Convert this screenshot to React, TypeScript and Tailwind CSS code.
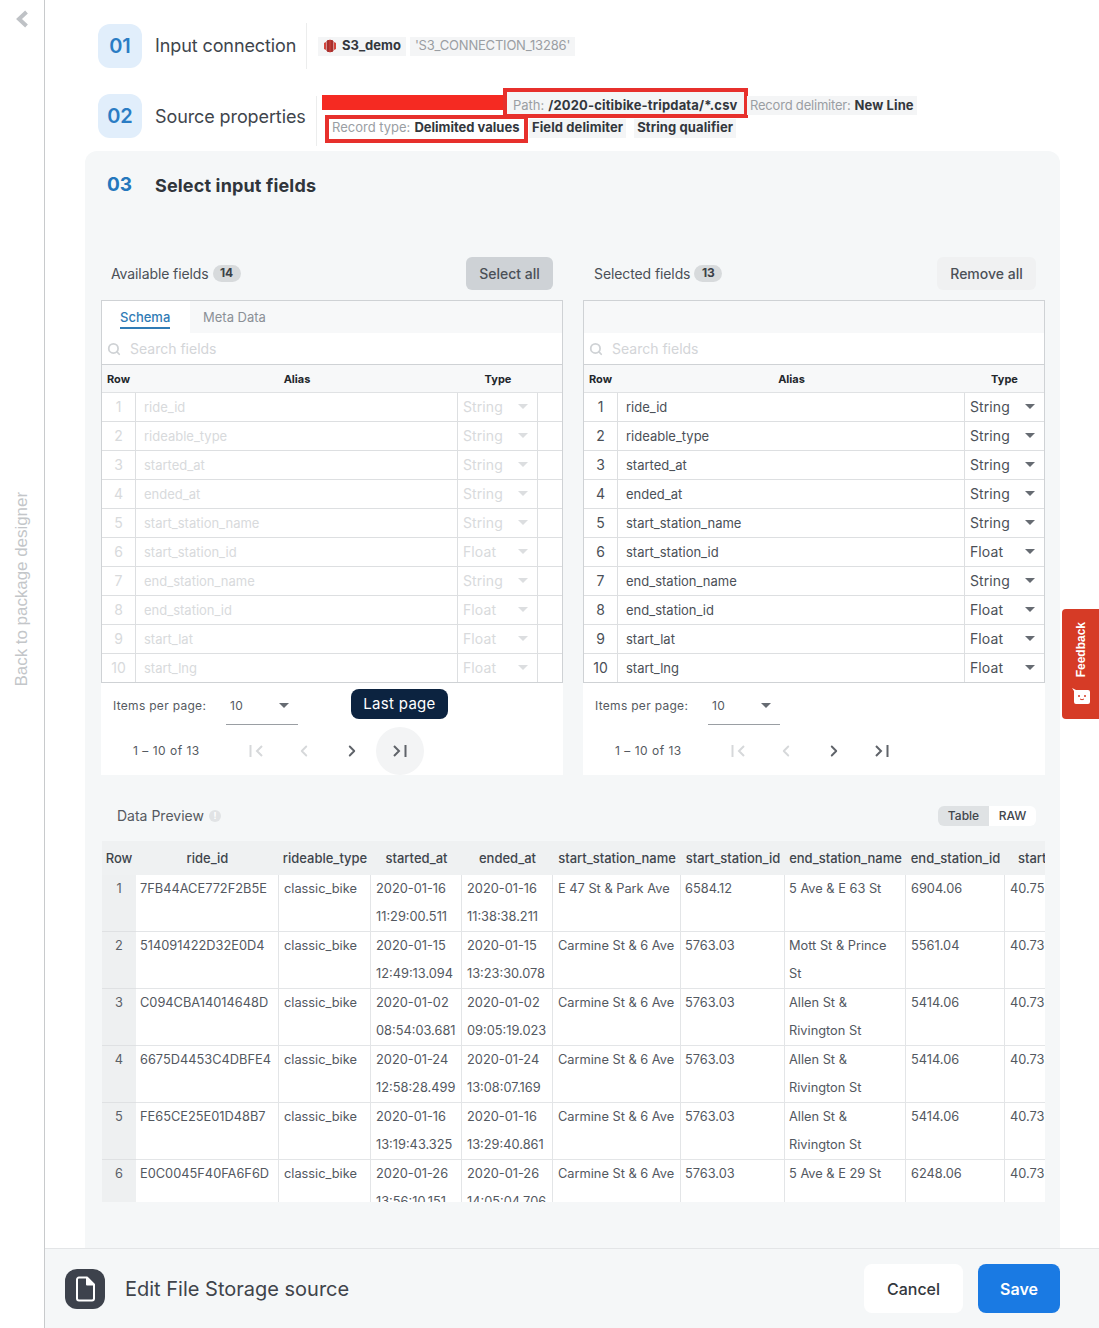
import { ChevronLeft, ChevronRight, Search } from 'lucide-react'

const fields = [
  ['ride_id', 'String'],
  ['rideable_type', 'String'],
  ['started_at', 'String'],
  ['ended_at', 'String'],
  ['start_station_name', 'String'],
  ['start_station_id', 'Float'],
  ['end_station_name', 'String'],
  ['end_station_id', 'Float'],
  ['start_lat', 'Float'],
  ['start_lng', 'Float'],
]

const columns = [
  ['Row', 'w-[34px]'],
  ['ride_id', 'w-[143px]'],
  ['rideable_type', 'w-[92px]'],
  ['started_at', 'w-[91px]'],
  ['ended_at', 'w-[91px]'],
  ['start_station_name', 'w-[128px]'],
  ['start_station_id', 'w-[104px]'],
  ['end_station_name', 'w-[121px]'],
  ['end_station_id', 'w-[99px]'],
  ['start_lat', 'w-[76px]'],
]

const preview = [
  ['7FB44ACE772F2B5E', '2020-01-16 11:29:00.511', '2020-01-16 11:38:38.211', 'E 47 St & Park Ave', '6584.12', '5 Ave & E 63 St', '6904.06', '40.75'],
  ['514091422D32E0D4', '2020-01-15 12:49:13.094', '2020-01-15 13:23:30.078', 'Carmine St & 6 Ave', '5763.03', 'Mott St & Prince St', '5561.04', '40.73'],
  ['C094CBA14014648D', '2020-01-02 08:54:03.681', '2020-01-02 09:05:19.023', 'Carmine St & 6 Ave', '5763.03', 'Allen St & Rivington St', '5414.06', '40.73'],
  ['6675D4453C4DBFE4', '2020-01-24 12:58:28.499', '2020-01-24 13:08:07.169', 'Carmine St & 6 Ave', '5763.03', 'Allen St & Rivington St', '5414.06', '40.73'],
  ['FE65CE25E01D48B7', '2020-01-16 13:19:43.325', '2020-01-16 13:29:40.861', 'Carmine St & 6 Ave', '5763.03', 'Allen St & Rivington St', '5414.06', '40.73'],
  ['E0C0045F40FA6F6D', '2020-01-26 13:56:10.151', '2020-01-26 14:05:04.706', 'Carmine St & 6 Ave', '5763.03', '5 Ave & E 29 St', '6248.06', '40.73'],
]

function Caret({ light }: { light?: boolean }) {
  return (
    <span className={`block w-0 h-0 border-x-[5px] border-x-transparent border-t-[5px] ${light ? 'border-t-[#dcdee0]' : 'border-t-[#666b72]'}`} />
  )
}

function LastIcon({ className }: { className?: string }) {
  return (
    <svg width="16" height="14" viewBox="0 0 16 14" fill="none" stroke="currentColor" strokeWidth="2" className={className}>
      <path d="M2 2l5 5-5 5" />
      <path d="M13.5 1v12" />
    </svg>
  )
}

function FieldPanel({ faded, tabs, tooltip }: { faded?: boolean; tabs?: boolean; tooltip?: boolean }) {
  const text = faded ? 'text-[#d8dadc]' : 'text-[#4b5057]'
  const cols = tabs ? 'grid-cols-[34px_322px_80px_1fr]' : 'grid-cols-[34px_347px_1fr]'
  return (
    <div className="w-[462px] relative">
      <div className="bg-white border border-[#cfd2d5] h-[383px] overflow-hidden">
        <div className="h-[32px] flex bg-[#f7f8f9]">
          {tabs && (
            <>
              <div className="w-[88px] bg-white pl-[18px] pt-[8px] flex items-start">
                <span className="block text-[13px] leading-[17px] font-medium text-[#2f7bb5] border-b-2 border-[#2f7bb5] pb-[1px]">Schema</span>
              </div>
              <div className="pl-[13px] pt-[8px] text-[13px] leading-[17px] text-[#8b9097]">Meta Data</div>
            </>
          )}
        </div>
        <div className="h-[32px] flex items-center gap-[9px] pl-[5px] border-b border-[#cfd2d5]">
          <Search size={14} strokeWidth={3} className="text-[#cfd2d5]" />
          <span className="text-[14px] text-[#d3d5d8]">Search fields</span>
        </div>
        <div className={`grid ${cols} h-[28px] pt-[1px] bg-[#f7f8f9] items-center border-b border-[#e0e2e4] text-[11px] font-bold text-[#23272c]`}>
          <span className="pl-[5px]">Row</span>
          <span className="text-center">Alias</span>
          <span className="text-center">Type</span>
        </div>
        {fields.map(([name, type], i) => (
          <div key={name} className={`grid ${cols} h-[29px] border-b border-[#dddfe1] text-[13px] ${text}`}>
            <span className="text-center text-[14px] leading-[28px] border-r border-[#dddfe1]">{i + 1}</span>
            <span className="pl-[8px] leading-[28px] border-r border-[#dddfe1]">{name}</span>
            <span className={`flex items-center justify-between pl-[5px] pr-[9px] pb-[1px] text-[14px] tracking-[0.1px] ${tabs ? 'border-r border-[#dddfe1]' : ''}`}>
              {type}
              <Caret light={faded} />
            </span>
            {tabs && <span />}
          </div>
        ))}
      </div>
      <div className="bg-white h-[92px] text-[12px] text-[#555a61] tracking-[0.3px]">
        <div className="flex items-center h-[39px] pt-[6px] pl-[12px]">
          <span className="w-[113px]">Items per page:</span>
          <div className="w-[72px] h-[33px] flex items-center justify-between pl-[4px] pr-[9px] pb-[5px] border-b border-[#9a9ea3] mt-[6px]">
            10
            <Caret />
          </div>
        </div>
        <div className="flex items-center h-[48px] mt-[5px] pl-[32px]">
          <span className="w-[99px] tracking-[0.5px]">1 – 10 of 13</span>
          <div className="w-[48px] flex justify-center text-[#d6d8da]">
            <LastIcon className="rotate-180" />
          </div>
          <div className="w-[48px] flex justify-center text-[#d6d8da]">
            <ChevronLeft size={18} strokeWidth={2.5} />
          </div>
          <div className="w-[48px] flex justify-center text-[#5f6369]">
            <ChevronRight size={18} strokeWidth={2.5} />
          </div>
          <div className={`w-[48px] h-[48px] rounded-full flex items-center justify-center text-[#5f6369] ${tooltip ? 'bg-[#f3f4f5]' : ''}`}>
            <LastIcon />
          </div>
        </div>
      </div>
      {tooltip && (
        <div className="absolute left-[250px] top-[389px] w-[97px] h-[30px] rounded-lg bg-[#0c2340] text-white text-[15px] flex items-center justify-center tracking-[0.3px]">
          Last page
        </div>
      )}
    </div>
  )
}

function Chip({ label, value }: { label?: string; value?: string }) {
  return (
    <span className="inline-flex items-center h-[19px] px-[3px] bg-[#f4f5f6] text-[13px] whitespace-nowrap">
      {label && <span className="text-[#9a9ea3] mr-[4px] tracking-[-0.2px]">{label}</span>}
      {value && <b className="font-bold text-[#33373d] tracking-[0.1px]">{value}</b>}
    </span>
  )
}

export default function App() {
  return (
    <div className="relative flex h-[1328px] w-[1099px] overflow-hidden bg-white font-['Inter',sans-serif]">
      <aside className="w-[45px] shrink-0 border-r border-[#c8cacc] flex flex-col items-center">
        <svg width="14" height="18" viewBox="0 0 14 18" className="mt-[10px] ml-[-1px] text-[#bfc2c6]" fill="none" stroke="currentColor" strokeWidth="4">
          <path d="M11.500 2L4 9l7.500 7" />
        </svg>
        <div className="mt-[464px] [writing-mode:vertical-rl] rotate-180 font-['Liberation_Sans',sans-serif] text-[17px] leading-[20px] tracking-[-0.05px] text-[#c3c6c9] whitespace-nowrap">
          Back to package designer
        </div>
      </aside>

      <main className="flex-1 min-w-0 flex flex-col">
        <div className="flex-1 min-h-0 overflow-hidden pl-[40px] pr-[39px]">
          <div className="flex items-center h-[44px] mt-[24px] pl-[13px]">
            <div className="w-[44px] h-[44px] rounded-xl bg-[#e1eefb] text-[#2a7cc4] text-[20px] font-semibold flex items-center justify-center">01</div>
            <span className="ml-[13px] pb-[2px] text-[18px] tracking-[-0.1px] text-[#40454c] w-[151px] whitespace-nowrap">Input connection</span>
            <span className="w-px h-[46px] bg-[#eceded]" />
            <div className="ml-[11px] flex gap-[4px]">
              <span className="inline-flex items-center h-[19px] px-[5px] bg-[#f4f5f6] text-[13px] font-bold text-[#33373d] whitespace-nowrap">
                <svg width="14" height="14" viewBox="0 0 14 14" className="mr-[5px]">
                  <path d="M4.500 1h5l1 1.500v9l-1 1.500h-5l-1-1.500v-9z" fill="#a92f2c" />
                  <path d="M1 4l2-1v8l-2-1zM13 4l-2-1v8l2-1z" fill="#d2453c" />
                  <path d="M6.500 0.500h1v13h-1z" fill="#d2453c" />
                </svg>
                S3_demo
              </span>
              <span className="inline-flex items-center h-[19px] px-[5px] bg-[#f4f5f6] text-[13px] tracking-[-0.2px] text-[#9a9ea3] whitespace-nowrap">'S3_CONNECTION_13286'</span>
            </div>
          </div>

          <div className="flex items-start mt-[26px] pl-[13px] h-[57px]">
            <div className="w-[44px] h-[44px] rounded-xl bg-[#e1eefb] text-[#2a7cc4] text-[20px] font-semibold flex items-center justify-center">02</div>
            <span className="ml-[13px] mt-[9px] text-[18px] tracking-[-0.1px] text-[#40454c] w-[161px] whitespace-nowrap">Source properties</span>
            <span className="w-px h-[50px] mt-[2px] bg-[#eceded]" />
            <div className="ml-[5px] -mt-[6px]">
              <div className="flex items-center h-[30px]">
                <span className="w-[181px] h-[15px] bg-[#f52a22] -mt-[2px]" />
                <span className="inline-flex items-center h-[30px] w-[245px] pl-[6px] pt-[5px] border-[4px] border-[#e7302c] bg-[#f4f5f6]">
                  <span className="text-[13px] text-[#9a9ea3] mr-[4px]">Path:</span>
                  <b className="text-[13px] font-bold text-[#33373d] tracking-[0.15px] whitespace-nowrap">/2020-citibike-tripdata/*.csv</b>
                </span>
                <span className="-ml-[1px] mt-[1px]"><Chip label="Record delimiter:" value="New Line" /></span>
              </div>
              <div className="flex items-center h-[28px] -mt-[3px] pl-[3px]">
                <span className="inline-flex items-center h-[28px] w-[203px] pl-[3px] pb-[2px] border-[4px] border-[#e7302c] bg-white text-[13px] whitespace-nowrap">
                  <span className="text-[#9a9ea3] mr-[4px]">Record type:</span>
                  <b className="font-bold text-[#33373d]">Delimited values</b>
                </span>
                <span className="ml-[1px] -mt-[2px] flex gap-[8px]">
                  <Chip value="Field delimiter" />
                  <Chip value="String qualifier" />
                </span>
              </div>
            </div>
          </div>

          <section className="h-[1097px] bg-[#f5f7f8] rounded-t-xl pl-[16px] pr-[15px] overflow-hidden">
            <div className="flex items-center h-[22px] mt-[23px] pl-[6px]">
              <span className="w-[48px] text-[19px] font-bold text-[#2477bd]">03</span>
              <span className="text-[18px] font-bold tracking-[0.15px] text-[#30353b]">Select input fields</span>
            </div>

            <div className="flex gap-[20px] mt-[61px] h-[33px]">
              <div className="w-[462px] flex items-center justify-between pl-[10px] pr-[10px]">
                <span className="flex items-center gap-[4px] pb-[1px] text-[14px] tracking-[-0.1px] text-[#4b5057]">
                  Available fields
                  <b className="w-[28px] h-[17px] rounded-full bg-[#d7dadc] text-[12px] font-bold text-[#3b4046] flex items-center justify-center">14</b>
                </span>
                <button className="w-[87px] h-[33px] pb-[1px] rounded-md bg-[#ced2d6] text-[14px] font-medium text-[#4b5057]">Select all</button>
              </div>
              <div className="w-[462px] flex items-center justify-between pl-[11px] pr-[9px]">
                <span className="flex items-center gap-[4px] pb-[1px] text-[14px] tracking-[-0.1px] text-[#4b5057]">
                  Selected fields
                  <b className="w-[28px] h-[17px] rounded-full bg-[#d7dadc] text-[12px] font-bold text-[#3b4046] flex items-center justify-center">13</b>
                </span>
                <button className="w-[99px] h-[33px] pb-[1px] rounded-md bg-[#f0f1f2] text-[14px] font-medium text-[#4b5057]">Remove all</button>
              </div>
            </div>

            <div className="flex gap-[20px] mt-[10px]">
              <FieldPanel faded tabs tooltip />
              <FieldPanel />
            </div>

            <div className="flex items-center justify-between h-[20px] mt-[31px] pl-[16px] pr-[9px]">
              <span className="flex items-center gap-[5px] pb-[1px] text-[14px] text-[#555a61]">
                Data Preview
                <span className="w-[12px] h-[12px] rounded-full bg-[#e1e3e5] text-white text-[9px] font-bold flex items-center justify-center">!</span>
              </span>
              <div className="flex h-[20px] rounded-md overflow-hidden text-[12px] font-medium text-[#41464c]">
                <span className="w-[51px] bg-[#dfe2e4] flex items-center justify-center">Table</span>
                <span className="w-[47px] bg-white flex items-center justify-center">RAW</span>
              </div>
            </div>

            <div className="mt-[15px] ml-[1px] w-[943px] h-[361px] overflow-hidden">
              <table className="table-fixed w-[979px] border-separate border-spacing-0 text-[12.8px] text-[#53585f]">
                <colgroup>
                  {columns.map(([name, width]) => (
                    <col key={name} className={width} />
                  ))}
                </colgroup>
                <thead>
                  <tr className="h-[34px] bg-[#eff1f2]">
                    {columns.map(([name]) => (
                      <th key={name} className="pt-[1px] text-[13px] font-medium text-[#40454c] text-center whitespace-nowrap px-0">{name}</th>
                    ))}
                  </tr>
                </thead>
                <tbody>
                  {preview.map((r, i) => (
                    <tr key={r[0]} className="h-[57px] bg-white align-top">
                      <td className="bg-[#eef0f1] text-center leading-[28px] text-[#5b6067] border-b border-[#dfe1e3]">{i + 1}</td>
                      <td className="px-[4px] leading-[28px] border-r border-b border-[#e3e5e7] whitespace-nowrap">{r[0]}</td>
                      <td className="px-[5px] leading-[28px] border-r border-b border-[#e3e5e7]">classic_bike</td>
                      {r.slice(1).map((v, j) => (
                        <td key={j} className={`leading-[28px] border-r border-b border-[#e3e5e7] ${j === 2 ? 'pl-[5px] pr-0' : j === 3 || j === 4 ? 'px-[4px]' : 'px-[5px]'}`}>{v}</td>
                      ))}
                    </tr>
                  ))}
                </tbody>
              </table>
            </div>
          </section>
        </div>

        <footer className="h-[80px] shrink-0 border-t border-[#e3e5e7] bg-[#f5f7f8] flex items-center pl-[20px] pr-[39px]">
          <div className="w-[40px] h-[40px] rounded-xl bg-[#3d424c] flex items-center justify-center">
            <svg width="22" height="26" viewBox="0 0 22 26" fill="none" stroke="white" strokeWidth="2" strokeLinejoin="round">
              <path d="M3 3.500a2 2 0 0 1 2-2h8l7 7v14a2 2 0 0 1-2 2H5a2 2 0 0 1-2-2z" />
              <path d="M13 1.500v7h7" fill="white" />
            </svg>
          </div>
          <span className="ml-[20px] flex-1 text-[20px] text-[#3f444b]">Edit File Storage source</span>
          <button className="w-[99px] h-[49px] rounded-lg bg-white text-[16px] font-medium text-[#33373d]">Cancel</button>
          <button className="ml-[15px] w-[82px] h-[49px] rounded-lg bg-[#1a7ae3] text-[16px] font-semibold text-white">Save</button>
        </footer>
      </main>

      <div className="absolute right-0 top-[609px] w-[37px] h-[110px] rounded-l bg-[#d63b26] flex flex-col items-center text-white">
        <span className="mt-[13px] [writing-mode:vertical-rl] rotate-180 font-['Liberation_Sans',sans-serif] text-[12px] font-bold leading-[16px]">Feedback</span>
        <svg width="18" height="16" viewBox="0 0 18 16" className="mt-[11px]">
          <path d="M0 0l4 2h12a2 2 0 0 1 2 2v10a2 2 0 0 1-2 2H4a2 2 0 0 1-2-2V3z" fill="white" />
          <circle cx="7" cy="8" r="1" fill="#d63b26" />
          <circle cx="13" cy="8" r="1" fill="#d63b26" />
          <path d="M8 11q2 1.500 4 0" stroke="#d63b26" fill="none" />
        </svg>
      </div>
    </div>
  )
}
